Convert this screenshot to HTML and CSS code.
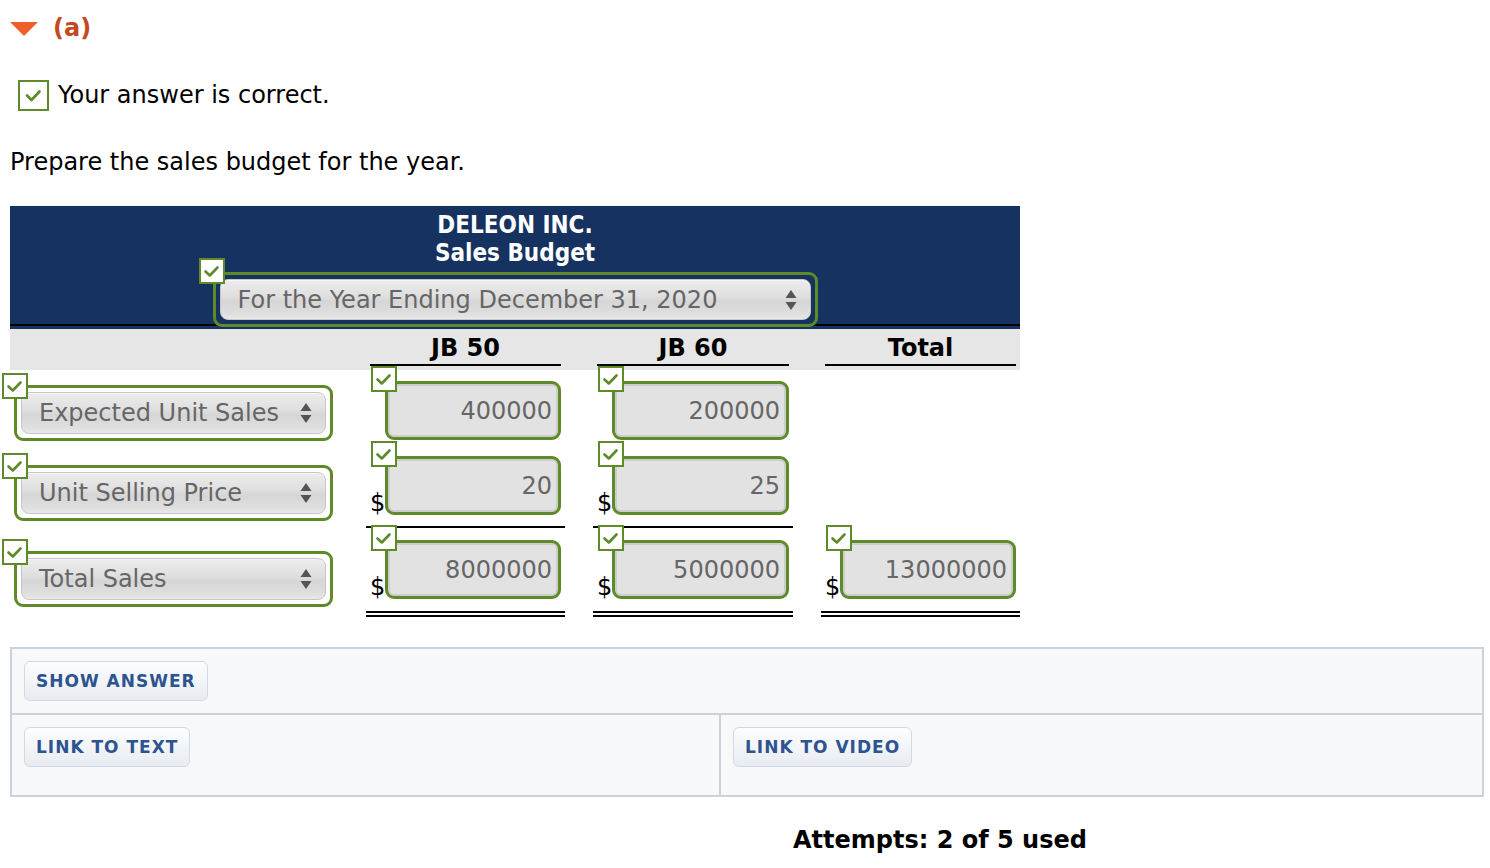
FILE: index.html
```html
<!DOCTYPE html>
<html lang="en">
<head>
<meta charset="utf-8">
<title>Sales Budget</title>
<link rel="stylesheet" href="styles.css">
</head>
<body>
<div class="page">
  <div class="part-head">
    <span class="tri"></span>
    <span class="part-label">(a)</span>
  </div>

  <div class="correct">
    <span class="cbox"><svg viewBox="0 0 27 27" width="27" height="27"><path d="M7 13.5 L11.5 18 L19.5 9.5" fill="none" stroke="#5f8a2a" stroke-width="2.6" stroke-linecap="round" stroke-linejoin="round"/></svg></span>
    <span>Your answer is correct.</span>
  </div>

  <p class="prompt">Prepare the sales budget for the year.</p>

  <div class="budget">
    <div class="budget-top">
      <div class="budget-head">
        <div class="title">DELEON INC.</div>
        <div class="title">Sales Budget</div>
        <div class="hdr-sel">
          <div class="gbox gbox-wide">
            <span class="badge"><svg viewBox="0 0 22 22" width="22" height="22"><path d="M4.5 11.5 L8.8 15.5 L16.5 7.5" fill="none" stroke="#5f8a2a" stroke-width="2.6" stroke-linecap="round" stroke-linejoin="round"/></svg></span>
            <div class="sel"><span>For the Year Ending December 31, 2020</span><svg class="arrows" viewBox="0 0 12 24" width="12" height="24"><path d="M6 2 L11.5 10 L0.5 10 Z M6 22 L11.5 14 L0.5 14 Z" fill="#555"/></svg></div>
          </div>
        </div>
      </div>
    </div>

    <div class="colheads">
      <div></div>
      <div class="colhead"><div class="colhead-txt">JB 50</div></div>
      <div class="colhead"><div class="colhead-txt">JB 60</div></div>
      <div class="colhead"><div class="colhead-txt">Total</div></div>
    </div>

    <div class="row r1">
      <div class="lab">
        <div class="gbox gbox-lab">
          <span class="badge"><svg viewBox="0 0 22 22" width="22" height="22"><path d="M4.5 11.5 L8.8 15.5 L16.5 7.5" fill="none" stroke="#5f8a2a" stroke-width="2.6" stroke-linecap="round" stroke-linejoin="round"/></svg></span>
          <div class="sel"><span>Expected Unit Sales</span><svg class="arrows" viewBox="0 0 12 24" width="12" height="24"><path d="M6 2 L11.5 10 L0.5 10 Z M6 22 L11.5 14 L0.5 14 Z" fill="#555"/></svg></div>
        </div>
      </div>
      <div class="amt">
        <span class="dollar"></span>
        <div class="inp"><span class="badge"><svg viewBox="0 0 22 22" width="22" height="22"><path d="M4.5 11.5 L8.8 15.5 L16.5 7.5" fill="none" stroke="#5f8a2a" stroke-width="2.6" stroke-linecap="round" stroke-linejoin="round"/></svg></span>400000</div>
      </div>
      <div class="amt">
        <span class="dollar"></span>
        <div class="inp"><span class="badge"><svg viewBox="0 0 22 22" width="22" height="22"><path d="M4.5 11.5 L8.8 15.5 L16.5 7.5" fill="none" stroke="#5f8a2a" stroke-width="2.6" stroke-linecap="round" stroke-linejoin="round"/></svg></span>200000</div>
      </div>
      <div class="amt empty"></div>
    </div>

    <div class="row r2">
      <div class="lab">
        <div class="gbox gbox-lab">
          <span class="badge"><svg viewBox="0 0 22 22" width="22" height="22"><path d="M4.5 11.5 L8.8 15.5 L16.5 7.5" fill="none" stroke="#5f8a2a" stroke-width="2.6" stroke-linecap="round" stroke-linejoin="round"/></svg></span>
          <div class="sel"><span>Unit Selling Price</span><svg class="arrows" viewBox="0 0 12 24" width="12" height="24"><path d="M6 2 L11.5 10 L0.5 10 Z M6 22 L11.5 14 L0.5 14 Z" fill="#555"/></svg></div>
        </div>
      </div>
      <div class="amt ruled">
        <span class="dollar">$</span>
        <div class="inp"><span class="badge"><svg viewBox="0 0 22 22" width="22" height="22"><path d="M4.5 11.5 L8.8 15.5 L16.5 7.5" fill="none" stroke="#5f8a2a" stroke-width="2.6" stroke-linecap="round" stroke-linejoin="round"/></svg></span>20</div>
      </div>
      <div class="amt ruled">
        <span class="dollar">$</span>
        <div class="inp"><span class="badge"><svg viewBox="0 0 22 22" width="22" height="22"><path d="M4.5 11.5 L8.8 15.5 L16.5 7.5" fill="none" stroke="#5f8a2a" stroke-width="2.6" stroke-linecap="round" stroke-linejoin="round"/></svg></span>25</div>
      </div>
      <div class="amt empty"></div>
    </div>

    <div class="row r3">
      <div class="lab">
        <div class="gbox gbox-lab">
          <span class="badge"><svg viewBox="0 0 22 22" width="22" height="22"><path d="M4.5 11.5 L8.8 15.5 L16.5 7.5" fill="none" stroke="#5f8a2a" stroke-width="2.6" stroke-linecap="round" stroke-linejoin="round"/></svg></span>
          <div class="sel"><span>Total Sales</span><svg class="arrows" viewBox="0 0 12 24" width="12" height="24"><path d="M6 2 L11.5 10 L0.5 10 Z M6 22 L11.5 14 L0.5 14 Z" fill="#555"/></svg></div>
        </div>
      </div>
      <div class="amt dbl">
        <span class="dollar">$</span>
        <div class="inp"><span class="badge"><svg viewBox="0 0 22 22" width="22" height="22"><path d="M4.5 11.5 L8.8 15.5 L16.5 7.5" fill="none" stroke="#5f8a2a" stroke-width="2.6" stroke-linecap="round" stroke-linejoin="round"/></svg></span>8000000</div>
      </div>
      <div class="amt dbl">
        <span class="dollar">$</span>
        <div class="inp"><span class="badge"><svg viewBox="0 0 22 22" width="22" height="22"><path d="M4.5 11.5 L8.8 15.5 L16.5 7.5" fill="none" stroke="#5f8a2a" stroke-width="2.6" stroke-linecap="round" stroke-linejoin="round"/></svg></span>5000000</div>
      </div>
      <div class="amt dbl">
        <span class="dollar">$</span>
        <div class="inp"><span class="badge"><svg viewBox="0 0 22 22" width="22" height="22"><path d="M4.5 11.5 L8.8 15.5 L16.5 7.5" fill="none" stroke="#5f8a2a" stroke-width="2.6" stroke-linecap="round" stroke-linejoin="round"/></svg></span>13000000</div>
      </div>
    </div>
  </div>

  <div class="panel">
    <div class="panel-row1">
      <button class="btn" type="button">SHOW ANSWER</button>
    </div>
    <div class="panel-row2">
      <div class="pcell pcell-left"><button class="btn" type="button">LINK TO TEXT</button></div>
      <div class="pcell"><button class="btn" type="button">LINK TO VIDEO</button></div>
    </div>
  </div>

  <div class="attempts">Attempts: 2 of 5 used</div>
</div>
</body>
</html>
```

FILE: styles.css
```css
* { box-sizing: border-box; }

body {
  margin: 0;
  background: #fff;
  color: #000;
  font-family: "DejaVu Sans", Verdana, sans-serif;
  font-size: 24px;
}

.page {
  padding: 0 6px 20px 10px;
}

/* part header */
.part-head {
  height: 56px;
  display: flex;
  align-items: center;
  gap: 15px;
}
.tri {
  width: 0;
  height: 0;
  border-left: 14px solid transparent;
  border-right: 14px solid transparent;
  border-top: 14px solid #ef5f29;
  margin-top: 2px;
}
.part-label {
  font-weight: bold;
  font-size: 24px;
  color: #c3491f;
}

/* correct notice */
.correct {
  margin-top: 23px;
  height: 32px;
  display: flex;
  align-items: center;
  gap: 9px;
  padding-left: 8px;
}
.cbox {
  width: 31px;
  height: 31px;
  border: 2px solid #5f8a2a;
  background: #fff;
  display: flex;
  align-items: center;
  justify-content: center;
}

.prompt {
  margin: 35px 0 0;
  line-height: 32px;
}

/* budget table */
.budget {
  margin-top: 28px;
  width: 1010px;
}
.budget-top {
  background: #153261;
  padding-bottom: 3px;
}
.budget-head {
  height: 120px;
  border-bottom: 2px solid #000;
  padding-top: 5px;
  text-align: center;
  color: #fff;
}
.title {
  font-family: "DejaVu Sans Condensed", "DejaVu Sans", sans-serif;
  font-stretch: condensed;
  font-weight: bold;
  font-size: 24px;
  line-height: 28px;
}
.hdr-sel {
  display: flex;
  justify-content: center;
  margin-top: 5px;
}

.gbox {
  position: relative;
  border: 3px solid #5f8a2a;
  border-radius: 9px;
  padding: 4px;
  text-align: left;
}
.gbox-wide {
  width: 605px;
  height: 55px;
}
.gbox-lab {
  width: 319px;
  height: 56px;
}
.sel {
  height: 100%;
  display: flex;
  align-items: center;
  justify-content: space-between;
  border: 1px solid #c6c6c6;
  border-radius: 8px;
  background: linear-gradient(#ececec 0%, #e0e0e0 40%, #d6d6d6 55%, #dedede 85%, #e8e8e8 100%);
  box-shadow: inset 0 1px 0 #f6f6f6;
  padding: 0 13px 0 17px;
  color: #666;
  font-size: 24px;
  white-space: nowrap;
}
.arrows { flex: none; }

.badge {
  position: absolute;
  left: -17px;
  top: -17px;
  width: 26px;
  height: 26px;
  border: 2px solid #5f8a2a;
  background: #fff;
  display: flex;
  align-items: center;
  justify-content: center;
  z-index: 2;
}
.gbox-lab .badge {
  left: -15px;
  top: -15px;
}
.inp .badge {
  left: -17px;
  top: -18px;
}

.colheads,
.row {
  display: grid;
  grid-template-columns: 328px 199px 200px 199px;
  column-gap: 28px;
}
.colheads {
  background: #e6e6e6;
  height: 41px;
}
.colhead {
  padding: 4px 4px 0;
}
.colhead-txt {
  line-height: 31px;
  border-bottom: 2px solid #000;
  text-align: center;
  font-weight: bold;
  font-size: 24px;
}

.lab {
  padding-left: 4px;
}
.r1 .lab { padding-top: 15px; }
.r2 .lab { padding-top: 21px; }
.r3 .lab { padding-top: 23px; }

.amt {
  display: flex;
  align-items: flex-end;
  padding: 12px 4px 11px;
}
.r1 .amt { padding-top: 11px; padding-bottom: 4px; }
.amt.ruled { border-bottom: 2px solid #000; }
.amt.dbl { padding-bottom: 12px; border-bottom: 6px double #000; }

.dollar {
  width: 15px;
  flex: none;
  font-size: 24px;
  line-height: 24px;
}
.inp {
  position: relative;
  flex: 1;
  height: 59px;
  border: 3px solid #5f8a2a;
  border-radius: 9px;
  background: #e2e2e2;
  box-shadow: inset 0 0 0 2px #cdcdcd;
  display: flex;
  align-items: center;
  justify-content: flex-end;
  padding-right: 6px;
  color: #666;
  font-size: 24px;
}

/* bottom panel */
.panel {
  margin-top: 30px;
  width: 1474px;
  border: 2px solid #cbd2dd;
  background: #f7f8fa;
}
.panel-row1 {
  padding: 12px;
  border-bottom: 2px solid #cbd2dd;
}
.panel-row2 {
  display: grid;
  grid-template-columns: 709px 1fr;
}
.pcell {
  padding: 12px 12px 28px;
}
.pcell-left {
  border-right: 2px solid #cbd2dd;
}
.btn {
  height: 40px;
  padding: 0 11px;
  border: 1px solid #d3d9e2;
  border-radius: 6px;
  background: linear-gradient(#fcfdfe, #e8ebf0);
  font-family: "DejaVu Sans", Verdana, sans-serif;
  font-weight: bold;
  font-size: 17px;
  letter-spacing: 1px;
  color: #2e5391;
  cursor: pointer;
}

.attempts {
  margin-top: 27px;
  line-height: 32px;
  padding-left: 783px;
  font-weight: bold;
  font-size: 24px;
}
```
